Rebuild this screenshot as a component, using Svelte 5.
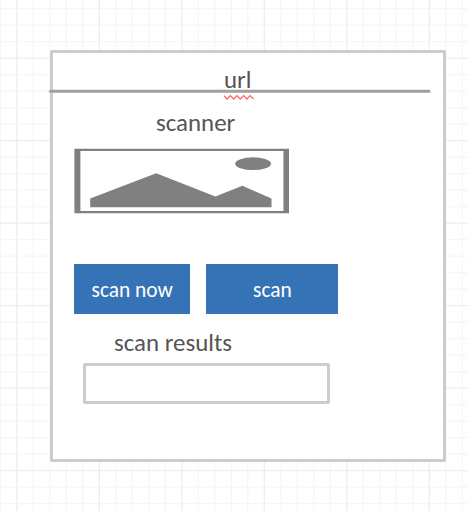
<script>
  const columns = Array.from({ length: 29 }, (_, i) => ({ at: 0.3 + i * 16.5, major: i % 5 === 1 }));
  const rows = Array.from({ length: 31 }, (_, i) => ({ at: 8.7 + i * 16.5, major: i % 5 === 3 }));
</script>

<main>
  <svg class="grid" width="468" height="511" aria-hidden="true">
    {#each columns as c}
      <line x1={c.at} x2={c.at} y1="0" y2="511" class:major={c.major} />
    {/each}
    {#each rows as r}
      <line y1={r.at} y2={r.at} x1="0" x2="468" class:major={r.major} />
    {/each}
  </svg>

  <section class="card">
    <header>
      <span class="url">url</span>
      <svg class="rule" width="384" height="14" aria-hidden="true">
        <path d="M2.5 4.2H381" stroke="#a0a0a0" stroke-width="3" stroke-linecap="round" fill="none" />
        <path d="M175.8 8.6l3.3 3.4 3.3-3.4 3.3 3.4 3.3-3.4 3.3 3.4 3.3-3.4 3.3 3.4 3.3-3.4 3.3 3.4" stroke="#ff6666" stroke-width="1.3" fill="none" />
      </svg>
    </header>
    <h1>scanner</h1>
    <svg class="picture" width="215" height="66" viewBox="74 148 215 66" aria-hidden="true">
      <path fill="#808080" fill-rule="evenodd" d="M74.4 148.7H289V213.3H74.4ZM80.4 151V211H283.4V151Z" />
      <path fill="#808080" d="M90.2 198.6L156.2 173.2L215.4 196.4L242.3 185.7L271.5 198.6V207.2H90.2Z" />
      <ellipse fill="#808080" cx="253.1" cy="163.7" rx="17.9" ry="6.4" />
    </svg>
    <div class="actions">
      <button class="now">scan now</button>
      <button class="scan">scan</button>
    </div>
    <h2>scan results</h2>
    <div class="results"></div>
  </section>
</main>

<style>
  main {
    position: relative;
    box-sizing: border-box;
    width: 468px;
    height: 511px;
    padding: 50px 0 0 50px;
    overflow: hidden;
    background: #fff;
    font-family: Carlito, Lato, "Liberation Sans", sans-serif;
    color: #555;
  }
  .grid { position: absolute; inset: 0; }
  .grid line { stroke: #f6f6f6; stroke-width: 1.3; }
  .grid line.major { stroke: #ededed; }
  .card {
    position: relative;
    box-sizing: border-box;
    width: 396px;
    height: 412.4px;
    border: 3px solid #ccc;
    border-radius: 2px;
    background: #fff;
  }
  header { position: relative; height: 50px; }
  .url {
    display: block;
    padding: 12px 0 0 171px;
    font-size: 24.9px;
    line-height: 30px;
  }
  .rule { position: absolute; left: -5px; top: 34px; }
  h1, h2 { margin: 0; font-size: 24.9px; line-height: 30px; font-weight: 400; }
  h1 { padding: 5px 0 0 103px; height: 39px; box-sizing: border-box; }
  .picture { display: block; margin: 6px 0 0 21px; }
  .actions { display: flex; gap: 16.4px; margin: 50.4px 0 0 21.4px; }
  button {
    height: 49.6px;
    padding: 2px 0 0;
    border: 0;
    background: #3673b6;
    color: #fff;
    font: 400 21.4px/30px Carlito, Lato, "Liberation Sans", sans-serif;
  }
  .now { width: 115.6px; }
  .scan { width: 132px; }
  h2 { margin: 14px 0 0 61px; }
  .results {
    box-sizing: border-box;
    width: 247px;
    height: 41px;
    margin: 5px 0 0 29.7px;
    border: 3px solid #ccc;
    border-radius: 2px;
  }
</style>
